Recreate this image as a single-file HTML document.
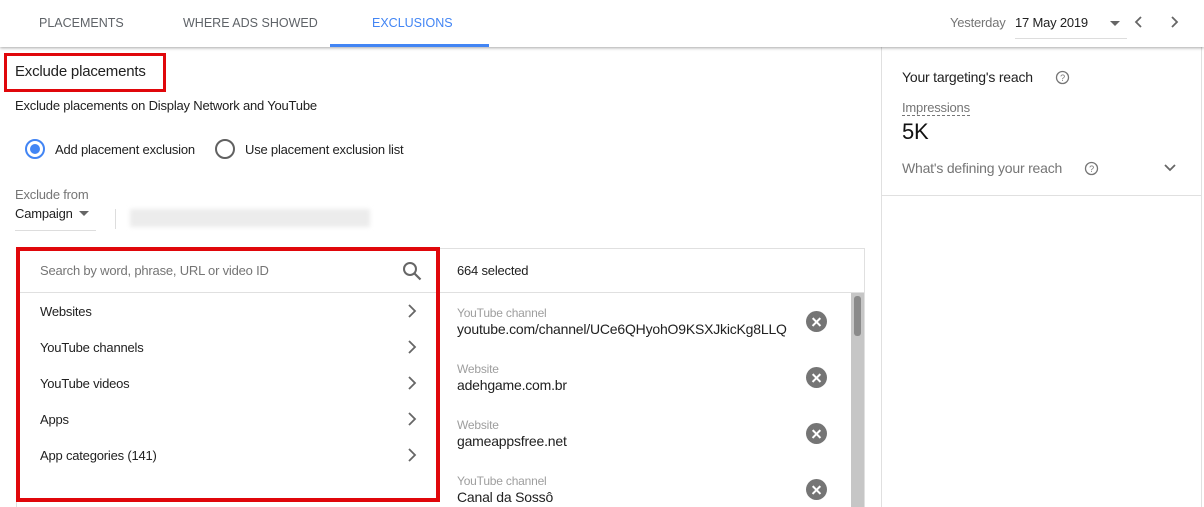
<!DOCTYPE html>
<html style="overflow:hidden;height:507px"><head><style>
*{margin:0;padding:0;box-sizing:border-box}
body{width:1204px;height:507px;overflow:hidden;background:#fff;font-family:"Liberation Sans",Arial,sans-serif;color:#212121;position:relative;letter-spacing:-0.2px}
.a{position:absolute;white-space:nowrap}
.tab{font-size:13px;color:#5f6368;top:16px;letter-spacing:0}
.gray{color:#757575}
.item{font-size:13px;left:40px;color:#212121}
.chev{left:405px}
.lab{font-size:12px;color:#9e9e9e;left:457px}
.val{font-size:14px;color:#212121;left:457px}
.x{left:806px;width:21px;height:21px;border-radius:50%;background:#757575}
.x:before,.x:after{content:"";position:absolute;left:5px;top:9.5px;width:11px;height:2.2px;background:#fff;transform:rotate(45deg)}
.x:after{transform:rotate(-45deg)}
</style></head><body>
<div class="a" style="left:0;top:0;width:1204px;height:47px;background:#fff;box-shadow:0 1px 3px rgba(0,0,0,.35);z-index:2"></div>
<div class="a tab" style="left:39px;z-index:3;font-size:12.5px">PLACEMENTS</div>
<div class="a tab" style="left:183px;z-index:3;font-size:12.5px">WHERE ADS SHOWED</div>
<div class="a tab" style="left:372px;color:#4285f4;z-index:3;font-size:12.5px">EXCLUSIONS</div>
<div class="a" style="left:330px;top:44px;width:159px;height:3px;background:#4285f4;z-index:3"></div>
<div class="a gray" style="left:950px;top:15px;font-size:13px;z-index:3">Yesterday</div>
<div class="a" style="left:1015px;top:15px;font-size:13px;z-index:3">17 May 2019</div>
<div class="a" style="left:1015px;top:38px;width:112px;height:1px;background:#ddd;z-index:3"></div>
<div class="a" style="left:1110px;top:21px;width:0;height:0;border-left:5px solid transparent;border-right:5px solid transparent;border-top:5px solid #666;z-index:3"></div>
<svg class="a" style="left:1131px;top:14px;z-index:3" width="16" height="16"><path d="M10 3L5 8l5 5" stroke="#666" stroke-width="1.8" fill="none"/></svg>
<svg class="a" style="left:1166px;top:14px;z-index:3" width="16" height="16"><path d="M6 3l5 5-5 5" stroke="#666" stroke-width="1.8" fill="none"/></svg>

<div class="a" style="left:4px;top:53px;width:162px;height:39px;border:3px solid #e0070b"></div>
<div class="a" style="left:15px;top:63px;font-size:15px">Exclude placements</div>
<div class="a" style="left:15px;top:98px;font-size:13px">Exclude placements on Display Network and YouTube</div>
<div class="a" style="left:25px;top:139px;width:20px;height:20px;border:2px solid #4285f4;border-radius:50%"></div>
<div class="a" style="left:30px;top:144px;width:10px;height:10px;background:#4285f4;border-radius:50%"></div>
<div class="a" style="left:55px;top:142px;font-size:13px">Add placement exclusion</div>
<div class="a" style="left:215px;top:139px;width:20px;height:20px;border:2px solid #616161;border-radius:50%"></div>
<div class="a" style="left:245px;top:142px;font-size:13px">Use placement exclusion list</div>
<div class="a gray" style="left:15px;top:187px;font-size:13px">Exclude from</div>
<div class="a" style="left:15px;top:206px;font-size:13px">Campaign</div>
<div class="a" style="left:79px;top:211px;border-left:5px solid transparent;border-right:5px solid transparent;border-top:5px solid #666"></div>
<div class="a" style="left:15px;top:230px;width:81px;height:1px;background:#ddd"></div>
<div class="a" style="left:115px;top:209px;width:1px;height:20px;background:#ddd"></div>
<div class="a" style="left:130px;top:209px;width:240px;height:18px;background:#ececec;filter:blur(2px)"></div>

<div class="a" style="left:16px;top:248px;width:849px;height:270px;border:1px solid #e0e0e0"></div>
<div class="a" style="left:439px;top:292px;width:426px;height:1px;background:#e0e0e0"></div>
<div class="a" style="left:457px;top:263px;font-size:13px">664 selected</div>
<div class="a" style="left:851px;top:293px;width:13px;height:220px;background:#c6c6c6"></div>
<div class="a" style="left:854px;top:296px;width:7px;height:40px;background:#8a8a8a;border-radius:3px"></div>

<div class="a lab" style="top:306px">YouTube channel</div>
<div class="a val" style="top:321px">youtube.com/channel/UCe6QHyohO9KSXJkicKg8LLQ</div>
<div class="a x" style="top:311px"></div>
<div class="a lab" style="top:362px">Website</div>
<div class="a val" style="top:377px">adehgame.com.br</div>
<div class="a x" style="top:367px"></div>
<div class="a lab" style="top:418px">Website</div>
<div class="a val" style="top:433px">gameappsfree.net</div>
<div class="a x" style="top:423px"></div>
<div class="a lab" style="top:474px">YouTube channel</div>
<div class="a val" style="top:489px">Canal da Sossô</div>
<div class="a x" style="top:479px"></div>

<div class="a" style="left:16px;top:247px;width:424px;height:255px;border:4px solid #e0070b;background:#fff"></div>
<div class="a" style="left:20px;top:292px;width:416px;height:1px;background:#e0e0e0"></div>
<div class="a" style="left:40px;top:263px;font-size:13px;color:#757575">Search by word, phrase, URL or video ID</div>
<svg class="a" style="left:401px;top:260px" width="22" height="22"><circle cx="9" cy="9" r="6" stroke="#666" stroke-width="2" fill="none"/><path d="M13.5 13.5l6 6" stroke="#666" stroke-width="2.2"/></svg>
<div class="a item" style="top:304px">Websites</div>
<div class="a item" style="top:340px">YouTube channels</div>
<div class="a item" style="top:376px">YouTube videos</div>
<div class="a item" style="top:412px">Apps</div>
<div class="a item" style="top:448px">App categories (141)</div>
<svg class="a chev" style="top:303px" width="14" height="16"><path d="M4 2l6 6-6 6" stroke="#666" stroke-width="1.8" fill="none"/></svg>
<svg class="a chev" style="top:339px" width="14" height="16"><path d="M4 2l6 6-6 6" stroke="#666" stroke-width="1.8" fill="none"/></svg>
<svg class="a chev" style="top:375px" width="14" height="16"><path d="M4 2l6 6-6 6" stroke="#666" stroke-width="1.8" fill="none"/></svg>
<svg class="a chev" style="top:411px" width="14" height="16"><path d="M4 2l6 6-6 6" stroke="#666" stroke-width="1.8" fill="none"/></svg>
<svg class="a chev" style="top:447px" width="14" height="16"><path d="M4 2l6 6-6 6" stroke="#666" stroke-width="1.8" fill="none"/></svg>

<div class="a" style="left:881px;top:47px;width:1px;height:460px;background:#e0e0e0"></div>
<div class="a" style="left:1201px;top:47px;width:1px;height:460px;background:#e0e0e0"></div>
<div class="a" style="left:881px;top:195px;width:320px;height:1px;background:#e0e0e0"></div>
<div class="a" style="left:902px;top:69px;font-size:14px">Your targeting's reach</div>
<svg class="a" style="left:1055px;top:70px" width="15" height="15"><circle cx="7.5" cy="7.5" r="6" stroke="#757575" stroke-width="1.3" fill="none"/><text x="7.5" y="11" font-size="9" text-anchor="middle" fill="#757575" font-family="Liberation Sans">?</text></svg>
<div class="a gray" style="left:902px;top:100px;font-size:13px;border-bottom:1px dashed #757575;line-height:15px">Impressions</div>
<div class="a" style="left:902px;top:119px;font-size:22px;color:#111">5K</div>
<div class="a gray" style="left:902px;top:160px;font-size:14px">What's defining your reach</div>
<svg class="a" style="left:1084px;top:161px" width="15" height="15"><circle cx="7.5" cy="7.5" r="6" stroke="#757575" stroke-width="1.3" fill="none"/><text x="7.5" y="11" font-size="9" text-anchor="middle" fill="#757575" font-family="Liberation Sans">?</text></svg>
<svg class="a" style="left:1162px;top:161px" width="16" height="14"><path d="M3 4l5 5 5-5" stroke="#666" stroke-width="1.8" fill="none"/></svg>
</body></html>
